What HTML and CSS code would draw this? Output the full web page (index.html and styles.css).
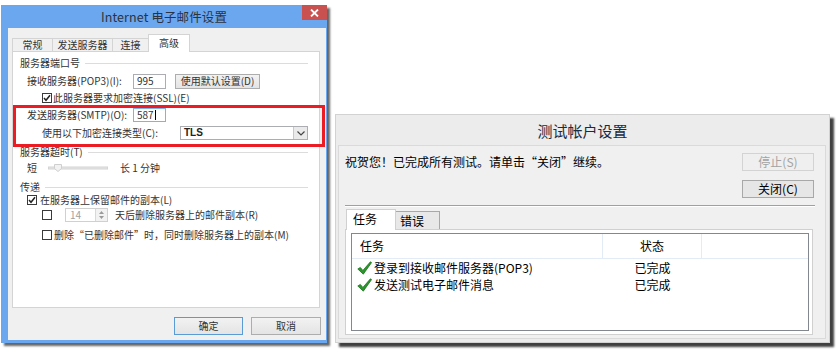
FILE: index.html
```html
<!DOCTYPE html>
<html lang="zh-CN">
<head>
<meta charset="utf-8">
<title>Internet 电子邮件设置</title>
<link rel="stylesheet" href="styles.css">
</head>
<body>
<div class="win-mail">
  <div class="mail-titlebar">
    <span class="mail-title">Internet 电子邮件设置</span>
    <div class="mail-close">
      <svg width="9" height="8" viewBox="0 0 9 8"><path d="M1 0.5 L8 7.5 M8 0.5 L1 7.5" stroke="#fff" stroke-width="1.8"/></svg>
    </div>
  </div>
  <div class="mail-client">
    <div class="mail-tabs">
      <div class="mtab mtab-w40">常规</div>
      <div class="mtab mtab-w60">发送服务器</div>
      <div class="mtab mtab-w36">连接</div>
      <div class="mtab mtab-w42 mtab-on">高级</div>
    </div>
    <div class="mail-panel">
      <div class="row grp">服务器端口号</div>
      <div class="row r2">
        <span class="lbl lbl-a">接收服务器(POP3)(I):</span>
        <span class="inp">995</span>
        <span class="btn btn-default-set">使用默认设置(D)</span>
      </div>
      <div class="row r3">
        <span class="cb cb-in2">
          <svg width="8" height="8" viewBox="0 0 8 8"><path d="M1 4 L3 6.3 L7 1.2" stroke="#222" stroke-width="1.5" fill="none"/></svg>
        </span>
        <span class="cb-text1">此服务器要求加密连接(SSL)(E)</span>
      </div>
      <div class="row r4">
        <span class="lbl lbl-a">发送服务器(SMTP)(O):</span>
        <span class="inp inp-focus">587<i class="caret"></i></span>
      </div>
      <div class="row r5">
        <span class="lbl lbl-b">使用以下加密连接类型(C):</span>
        <span class="sel">TLS
          <span class="sel-arrow"><svg width="8" height="5" viewBox="0 0 8 5"><path d="M0.5 0.5 L4 4 L7.5 0.5" stroke="#444" stroke-width="1.2" fill="none"/></svg></span>
        </span>
      </div>
      <div class="row grp r6">服务器超时(T)</div>
      <div class="row r7">
        <span class="lbl lbl-c">短</span>
        <svg class="slider" width="60" height="10" viewBox="0 0 60 10">
          <rect x="0.5" y="4" width="59" height="2" fill="#e6e6e6" stroke="#d4d4d4" stroke-width="1"/>
          <polygon points="6.5,1.5 13.5,1.5 13.5,5.5 10,8.5 6.5,5.5" fill="#f2f2f2" stroke="#cfcfcf" stroke-width="1"/>
        </svg>
        <span>长 1 分钟</span>
      </div>
      <div class="row grp r8">传递</div>
      <div class="row r9">
        <span class="cb cb-in1">
          <svg width="8" height="8" viewBox="0 0 8 8"><path d="M1 4 L3 6.3 L7 1.2" stroke="#222" stroke-width="1.5" fill="none"/></svg>
        </span>
        <span class="cb-text3">在服务器上保留邮件的副本(L)</span>
      </div>
      <div class="row r10">
        <span class="cb cb-in2"></span>
        <span class="spin">
          <span class="spin-field">14</span>
          <span class="spin-btns">
            <svg width="5" height="3" viewBox="0 0 5 3"><path d="M0 3 L2.5 0 L5 3 Z" fill="#9a9a9a"/></svg>
            <svg width="5" height="3" viewBox="0 0 5 3"><path d="M0 0 L2.5 3 L5 0 Z" fill="#9a9a9a"/></svg>
          </span>
        </span>
        <span class="spin-text">天后删除服务器上的邮件副本(R)</span>
      </div>
      <div class="row r11">
        <span class="cb cb-in2"></span>
        <span class="cb-text2">删除“已删除邮件”时，同时删除服务器上的副本(M)</span>
      </div>
    </div>
    <div class="mail-buttons">
      <span class="btn btn-ok">确定</span>
      <span class="btn btn-cancel">取消</span>
    </div>
  </div>
  <div class="highlight"></div>
</div>

<div class="win-test">
  <div class="test-title">测试帐户设置</div>
  <div class="test-client">
    <div class="test-top">
      <div class="test-msg">祝贺您！已完成所有测试。请单击“关闭”继续。</div>
      <div class="test-btns">
        <span class="tbtn tbtn-off">停止(S)</span>
        <span class="tbtn">关闭(C)</span>
      </div>
    </div>
    <div class="test-sep"></div>
    <div class="test-tabs">
      <div class="ttab ttab-on">任务</div>
      <div class="ttab">错误</div>
    </div>
    <div class="test-panel">
      <div class="list">
        <div class="list-head">
          <div class="col col-task">任务</div>
          <div class="col col-state">状态</div>
          <div class="col col-rest"></div>
        </div>
        <div class="list-row">
          <div class="col col-task">
            <svg class="ok" width="15" height="14" viewBox="0 0 15 14"><path d="M0.8 8 L3.3 6.4 L5.9 9.4 L13.4 0.8 L14.6 1.6 L6.3 13.2 Z" fill="#2b962b" stroke="#0f6a12" stroke-width="0.7" stroke-linejoin="round"/></svg>
            <span>登录到接收邮件服务器(POP3)</span>
          </div>
          <div class="col col-state">已完成</div>
          <div class="col col-rest"></div>
        </div>
        <div class="list-row">
          <div class="col col-task">
            <svg class="ok" width="15" height="14" viewBox="0 0 15 14"><path d="M0.8 8 L3.3 6.4 L5.9 9.4 L13.4 0.8 L14.6 1.6 L6.3 13.2 Z" fill="#2b962b" stroke="#0f6a12" stroke-width="0.7" stroke-linejoin="round"/></svg>
            <span>发送测试电子邮件消息</span>
          </div>
          <div class="col col-state">已完成</div>
          <div class="col col-rest"></div>
        </div>
      </div>
    </div>
  </div>
</div>
</body>
</html>
```

FILE: styles.css
```css
* { box-sizing: border-box; }
html, body { margin: 0; padding: 0; }
body {
  width: 837px;
  height: 355px;
  background: #fff;
  position: relative;
  overflow: hidden;
  font-family: "Noto Sans CJK SC", "Noto Sans", sans-serif;
}

/* ---------- left window ---------- */
.win-mail {
  position: absolute;
  left: 1px;
  top: 5px;
  width: 326px;
  height: 338px;
  background: #6ba7ef;
  padding: 0 1px 3px 7px;
  display: flex;
  flex-direction: column;
  box-shadow: 3px 3px 2px rgba(0, 0, 0, 0.6);
}
.mail-titlebar {
  height: 23px;
  margin: 0 -1px 0 -7px;
  display: flex;
  align-items: center;
  justify-content: center;
  position: relative;
}
.mail-title {
  font-size: 12.5px;
  color: #2c3340;
  letter-spacing: 0.1px;
}
.mail-close {
  position: absolute;
  right: 0;
  top: 0;
  width: 25px;
  height: 15px;
  background: #c9514f;
  display: flex;
  align-items: center;
  justify-content: center;
}
.mail-client {
  flex: 1;
  background: #f0f0f0;
  padding: 6px 5px 0 4px;
  display: flex;
  flex-direction: column;
  font-size: 10px;
  color: #333;
}
.mail-tabs {
  display: flex;
  align-items: flex-end;
  height: 18px;
  margin-bottom: -1px;
  position: relative;
  z-index: 1;
}
.mtab {
  height: 13px;
  margin-bottom: 1px;
  border: 1px solid #d4d4d4;
  border-bottom: none;
  border-right: none;
  background: #f0f0f0;
  display: flex;
  align-items: center;
  justify-content: center;
  font-size: 10px;
  line-height: 1;
}
.mtab-w40 { width: 40px; }
.mtab-w60 { width: 60px; }
.mtab-w36 { width: 36px; }
.mtab-w42 { width: 42px; }
.mtab-on {
  height: 18px;
  margin-bottom: 0;
  background: #fff;
  border-right: 1px solid #d4d4d4;
  align-items: flex-start;
  padding-top: 3px;
}
.mail-panel {
  width: 308px;
  height: 257px;
  background: #fff;
  border: 1px solid #d4d4d4;
  padding: 4px 11px 0 7px;
}
.row {
  display: flex;
  align-items: center;
  height: 14px;
  white-space: nowrap;
  line-height: 1;
}
.grp::after {
  content: "";
  flex: 1;
  height: 1px;
  background: #dcdcdc;
  margin-left: 5px;
}
.r2 { margin-top: 4px; }
.r3 { margin-top: 3px; }
.r4 { margin-top: 3px; }
.r5 { margin-top: 4px; }
.r6 { margin-top: 5px; }
.r7 { margin-top: 2px; }
.r8 { margin-top: 6px; height: 12px; }
.r9 { margin-top: 0; }
.r10 { margin-top: 1px; }
.r11 { margin-top: 6px; }

.lbl { flex: none; }
.lbl-a { margin-left: 7px; width: 106px; }
.lbl-b { margin-left: 22px; width: 138px; }
.lbl-c { margin-left: 7px; width: 21px; }

.inp {
  width: 33px;
  height: 15px;
  border: 1px solid #abadb3;
  background: #fff;
  padding-left: 3px;
  display: flex;
  align-items: center;
  font-size: 10px;
}
.inp-focus { border-color: #7db3e8; height: 14px; }
.caret {
  display: inline-block;
  width: 1px;
  height: 10px;
  background: #000;
  margin-left: 1px;
}
.btn {
  display: flex;
  align-items: center;
  justify-content: center;
  border: 1px solid #adadad;
  background: linear-gradient(#f2f2f2, #e4e4e4);
  font-size: 10px;
  line-height: 1;
}
.btn-default-set { width: 85px; height: 15px; margin-left: 9px; }
.btn-ok { width: 69px; height: 18px; border-color: #5b9bd5; }
.btn-cancel { width: 70px; height: 18px; }
.mail-buttons {
  display: flex;
  justify-content: flex-end;
  gap: 8px;
  margin-top: 9px;
}

.cb {
  width: 10px;
  height: 10px;
  border: 1px solid #3a3a3a;
  background: #fff;
  display: flex;
  align-items: center;
  justify-content: center;
  flex: none;
}
.cb-in1 { margin-left: 7px; }
.cb-in2 { margin-left: 22px; }
.cb-text1 { margin-left: 1px; }
.cb-text2 { margin-left: 2px; }
.cb-text3 { margin-left: 3px; }

.sel {
  width: 128px;
  height: 14px;
  border: 1px solid #abadb3;
  background: #fff;
  display: flex;
  align-items: center;
  justify-content: space-between;
  padding-left: 3px;
  font-size: 10px;
  font-family: "Liberation Sans", sans-serif;
  font-weight: bold;
  color: #222;
}
.sel-arrow {
  width: 14px;
  height: 12px;
  border-left: 1px solid #c8c8c8;
  background: #eaeaea;
  display: flex;
  align-items: center;
  justify-content: center;
}
.slider { flex: none; margin-right: 12px; }

.spin {
  display: flex;
  width: 43px;
  height: 14px;
  margin-left: 13px;
  border: 1px solid #d0d0d0;
  background: #fff;
}
.spin-field {
  flex: 1;
  color: #a0a0a0;
  padding-left: 4px;
  display: flex;
  align-items: center;
}
.spin-btns {
  width: 12px;
  border-left: 1px solid #d8d8d8;
  background: #f2f2f2;
  display: flex;
  flex-direction: column;
  align-items: center;
  justify-content: space-evenly;
}
.spin-text { margin-left: 7px; }

.highlight {
  position: absolute;
  left: 12px;
  top: 100px;
  width: 312px;
  height: 42px;
  border: 3px solid #ec1c24;
}

/* ---------- right window ---------- */
.win-test {
  position: absolute;
  left: 335px;
  top: 114px;
  width: 495px;
  height: 229px;
  background: #ececec;
  border: 1px solid #d2d2d2;
  box-shadow: 4px 4px 2px rgba(0, 0, 0, 0.75);
  display: flex;
  flex-direction: column;
  font-size: 12px;
  color: #000;
}
.test-title {
  height: 30px;
  display: flex;
  align-items: center;
  justify-content: center;
  font-size: 15px;
  color: #1c2a3e;
  padding-top: 1px;
}
.test-client {
  flex: 1;
  margin: 0 3px 3px 2px;
  background: #f0f0f0;
  border: 1px solid #dadada;
  padding: 7px 11px 0 6px;
  display: flex;
  flex-direction: column;
}
.test-top {
  display: flex;
  justify-content: space-between;
}
.test-msg {
  height: 18px;
  line-height: 18px;
  white-space: nowrap;
}
.test-btns {
  display: flex;
  flex-direction: column;
  gap: 9px;
}
.tbtn {
  width: 72px;
  height: 18px;
  border: 1px solid #a8a8a8;
  background: #e6e6e6;
  display: flex;
  align-items: center;
  justify-content: center;
  line-height: 1;
}
.tbtn-off {
  color: #a3a3a3;
  border-color: #d3d3d3;
  background: #efefef;
}
.test-sep {
  height: 2px;
  margin-top: 7px;
  margin-right: -1px;
  border-top: 1px solid #a0a0a0;
  border-bottom: 1px solid #fff;
}
.test-tabs {
  display: flex;
  align-items: flex-end;
  height: 21px;
  margin-top: 2px;
  margin-bottom: -1px;
  position: relative;
  z-index: 1;
  padding-left: 1px;
}
.ttab {
  width: 44px;
  height: 18px;
  margin-bottom: 1px;
  border: 1px solid #a8a8a8;
  border-bottom: none;
  border-left: none;
  background: #e8e8e8;
  display: flex;
  align-items: center;
  padding-left: 4px;
  line-height: 1;
}
.ttab-on {
  width: 50px;
  height: 21px;
  margin-bottom: 0;
  background: #fff;
  border-left: 1px solid #a8a8a8;
  border-color: #d0d0d0;
  align-items: flex-start;
  padding-top: 3px;
  padding-left: 6px;
}
.test-panel {
  width: 468px;
  height: 106px;
  background: #fff;
  border: 1px solid #d0d0d0;
  padding: 3px 3px 3px 5px;
}
.list {
  height: 98px;
  border: 1px solid #828790;
  background: #fff;
}
.list-head {
  display: flex;
  height: 25px;
  border-bottom: 1px solid #e3ecf6;
}
.list-head .col {
  height: 24px;
  display: flex;
  align-items: center;
}
.list-head .col-task { padding-left: 8px; }
.list-head .col-state,
.list-head .col-task { border-right: 1px solid #e3ecf6; }
.list-row {
  display: flex;
  height: 17px;
  align-items: center;
}
.col { flex: none; white-space: nowrap; line-height: 1; }
.col-task { width: 251px; display: flex; align-items: center; }
.col-state { width: 99px; display: flex; justify-content: center; }
.col-rest { flex: 1; }
.list-row .col-task { padding-left: 5px; }
.ok { flex: none; margin-right: 2px; }
```
